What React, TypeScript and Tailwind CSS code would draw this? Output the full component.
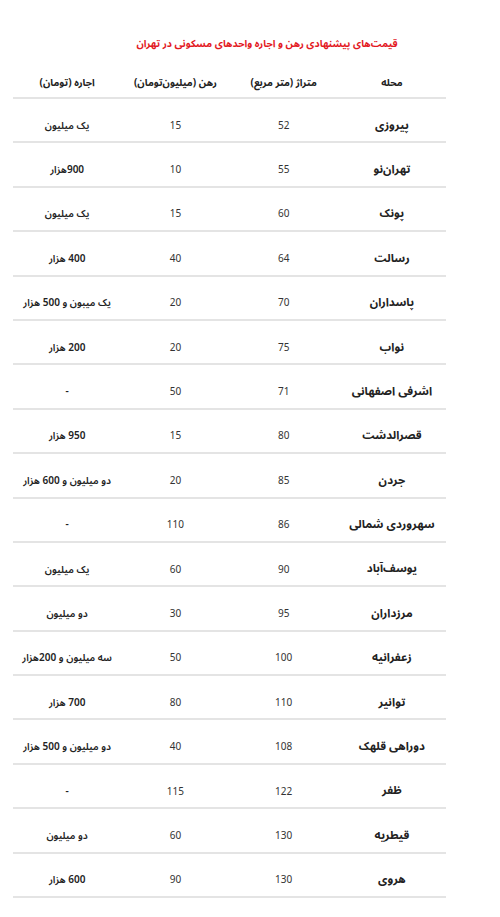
const rows: [string, string, string, string][] = [
  ["پیروزی", "52", "15", "یک میلیون"],
  ["تهران‌نو", "55", "10", "900هزار"],
  ["پونک", "60", "15", "یک میلیون"],
  ["رسالت", "64", "40", "400 هزار"],
  ["پاسداران", "70", "20", "یک میبون و 500 هزار"],
  ["نواب", "75", "20", "200 هزار"],
  ["اشرفی اصفهانی", "71", "50", "-"],
  ["قصرالدشت", "80", "15", "950 هزار"],
  ["جردن", "85", "20", "دو میلیون و 600 هزار"],
  ["سهروردی شمالی", "86", "110", "-"],
  ["یوسف‌آباد", "90", "60", "یک میلیون"],
  ["مرزداران", "95", "30", "دو میلیون"],
  ["زعفرانیه", "100", "50", "سه میلیون و 200هزار"],
  ["توانیر", "110", "80", "700 هزار"],
  ["دوراهی قلهک", "108", "40", "دو میلیون و 500 هزار"],
  ["ظفر", "122", "115", "-"],
  ["قیطریه", "130", "60", "دو میلیون"],
  ["هروی", "130", "90", "600 هزار"],
];

const headers = ["محله", "متراژ (متر مربع)", "رهن (میلیون‌تومان)", "اجاره (تومان)"];

export default function App() {
  return (
    <div
      dir="rtl"
      className="w-[500px] h-[917px] bg-white text-[#222] overflow-hidden"
      style={{ fontFamily: '"Noto Sans Arabic", "Noto Naskh Arabic", Vazirmatn, "DejaVu Sans", sans-serif' }}
    >
      {/* Title */}
      <div className="pt-[34px] pl-[34px] text-center">
        <h1 className="text-[10px] font-bold text-[#e3191f] leading-[20px] whitespace-nowrap">
          قیمت‌های پیشنهادی رهن و اجاره واحدهای مسکونی در تهران
        </h1>
      </div>

      {/* Table */}
      <div className="mr-[54px] ml-[13px] mt-[6px]">
        <div className="grid grid-cols-4 h-[39px] pt-2 border-b-2 border-[#e4e4e4] items-center text-[10px] font-bold">
          {headers.map((h) => (
            <div key={h} className="flex justify-center whitespace-nowrap">
              {h}
            </div>
          ))}
        </div>
        {rows.map((r, i) => (
          <div
            key={i}
            className="grid grid-cols-4 h-[44.4px] pt-[10px] border-b-2 border-[#e4e4e4] items-center text-[10px]"
          >
            <div className="flex justify-center whitespace-nowrap font-bold text-[11.5px]">{r[0]}</div>
            <div className="flex justify-center text-[#333]">{r[1]}</div>
            <div className="flex justify-center text-[#333]">{r[2]}</div>
            <div className="flex justify-center whitespace-nowrap font-semibold text-[10px]">{r[3]}</div>
          </div>
        ))}
      </div>
    </div>
  );
}
